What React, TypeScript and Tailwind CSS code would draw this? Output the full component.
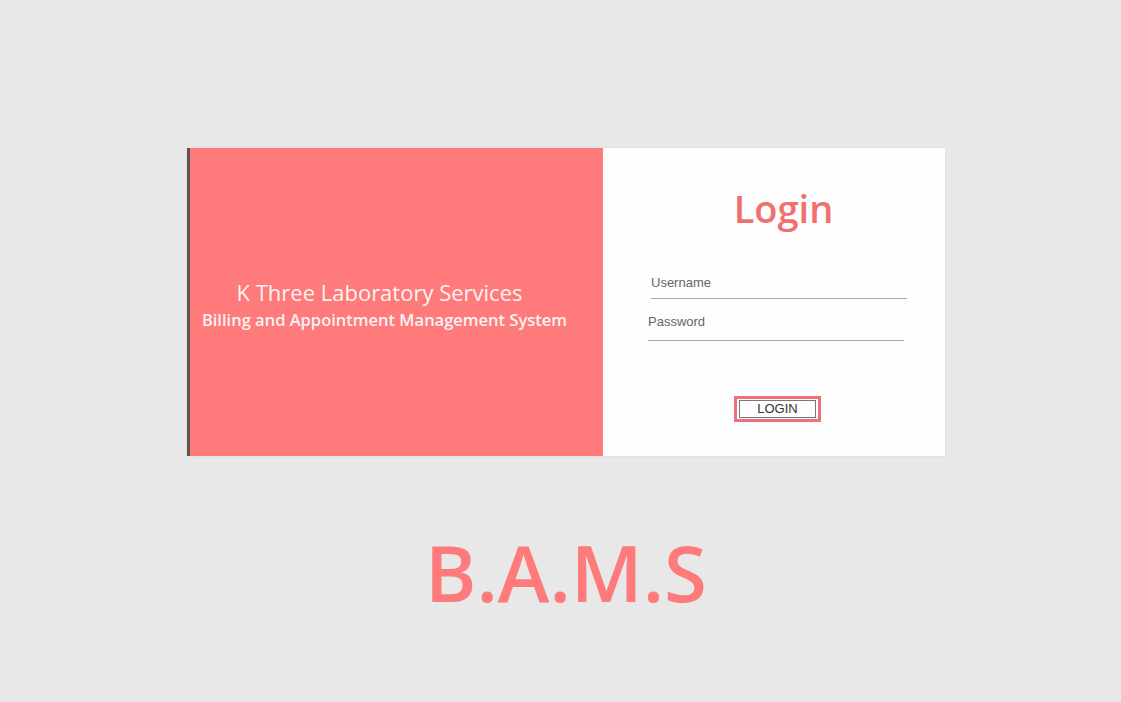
import React from "react";

export default function App() {
  const [user, setUser] = React.useState({ username: "", password: "" });

  return (
    <div className="flex flex-col items-center w-full min-h-[702px] bg-[#e8e8e8] pt-[148px] pl-[11px] font-['Open_Sans',sans-serif]">
      <div className="flex w-[758px] h-[308px] shadow-[0_0_2px_rgba(0,0,0,0.08)]">
        {/* left panel */}
        <div className="flex flex-col items-center justify-center w-[416px] h-full bg-[#ff7a7a] border-l-[3px] border-[#5c5455] text-[#fbf3f3] pr-[24px] pt-[6px]">
          <p className="text-[22px] leading-[27px] font-medium pr-[10px]">
            K Three Laboratory Services
          </p>
          <p className="text-[16.5px] leading-[24px] font-semibold mt-[2px]">
            Billing and Appointment Management System
          </p>
        </div>

        {/* right panel */}
        <div className="flex flex-col flex-1 h-full bg-[#fdfdfd] pl-[45px] pr-[38px]">
          <h1 className="text-center text-[#f07070] text-[38px] leading-[48px] font-semibold mt-[36px] pl-[12px]">
            Login
          </h1>

          <input
            className="mt-[35px] ml-[3px] w-[256px] h-[32px] text-[13px] text-[#555] placeholder-[#666] border-b border-[#a8a8a8] focus:outline-none font-['Liberation_Sans',sans-serif] bg-transparent"
            type="text"
            value={user.username}
            placeholder="Username"
            onChange={(e) => setUser({ ...user, username: e.target.value })}
          />
          <input
            className="mt-[4px] w-[256px] h-[38px] text-[13px] text-[#555] placeholder-[#666] border-b border-[#a8a8a8] focus:outline-none font-['Liberation_Sans',sans-serif] bg-transparent"
            type="password"
            value={user.password}
            placeholder="Password"
            onChange={(e) => setUser({ ...user, password: e.target.value })}
          />

          <div className="flex justify-center mt-[55px]">
            <button className="border-[3px] border-[#f0707a] px-[2px] py-[1px]">
              <span className="block w-[77px] h-[18px] border border-[#777] text-[13px] leading-[16px] text-[#333] font-['Liberation_Sans',sans-serif]">
                LOGIN
              </span>
            </button>
          </div>
        </div>
      </div>

      <h2 className="mt-[77px] text-[78px] leading-[78px] font-semibold text-[#ff7a7a]">
        B.A.M.S
      </h2>
    </div>
  );
}
